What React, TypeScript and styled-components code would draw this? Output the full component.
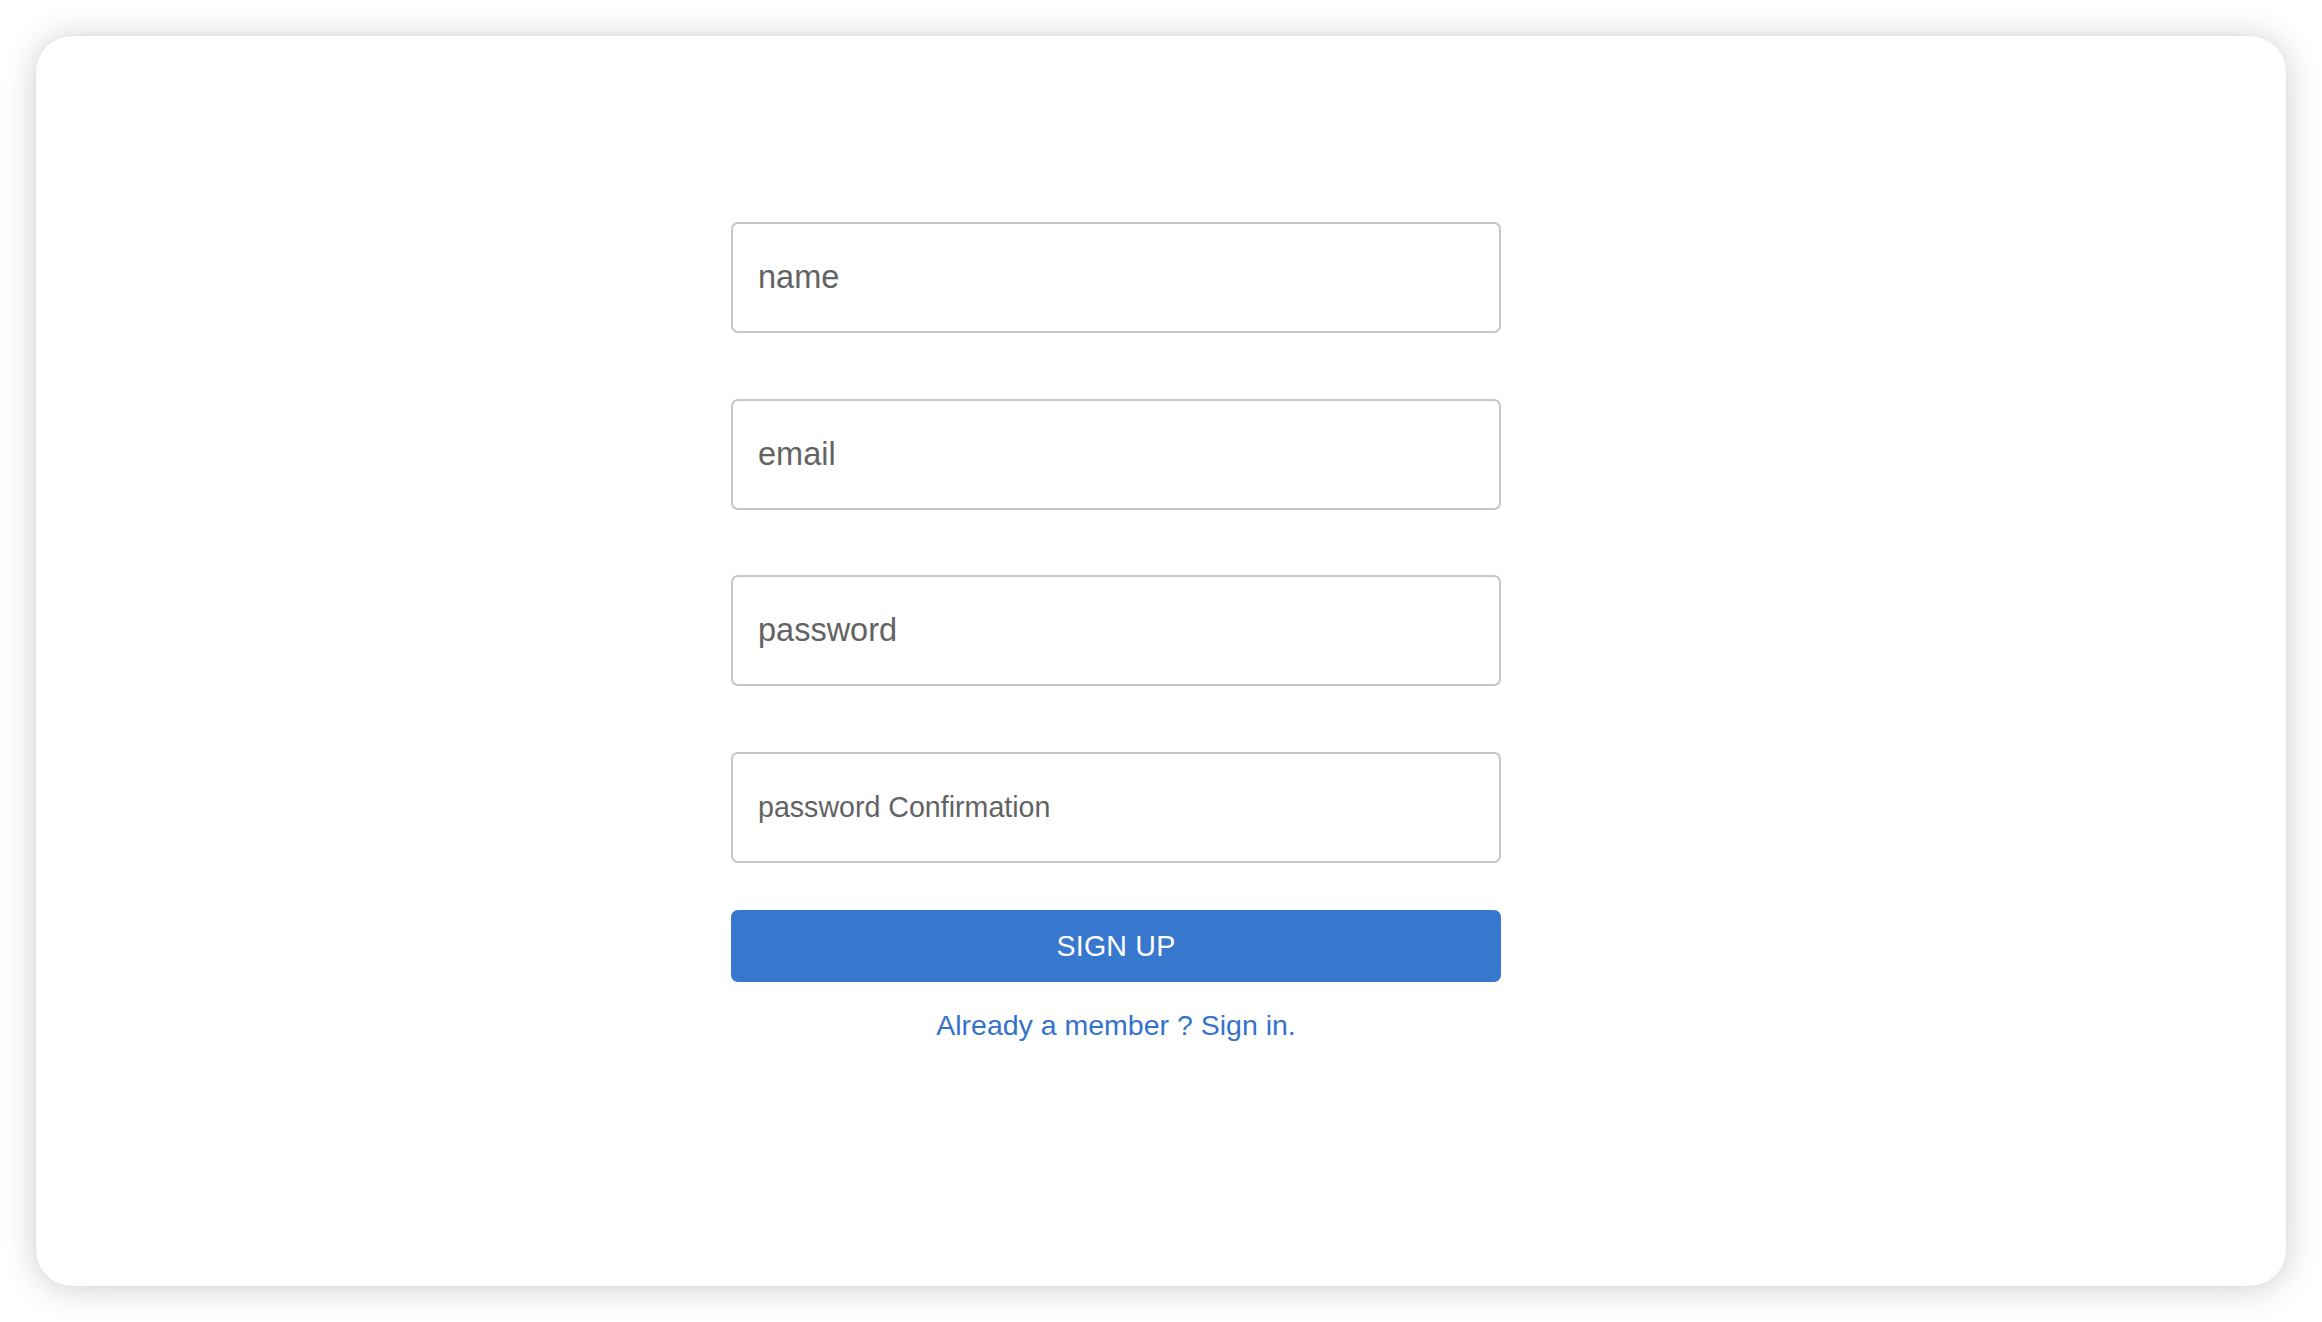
import React from "react";
import styled, { createGlobalStyle } from "styled-components";

const Global = createGlobalStyle`
  html, body {
    margin: 0;
    padding: 0;
    background: #ffffff;
  }
  body {
    font-family: "Liberation Sans", Arial, Helvetica, sans-serif;
  }
  * { box-sizing: border-box; }
`;

const Page = styled.div`
  padding: 36px;
  width: 2322px;
  height: 1322px;
`;

const Window = styled.div`
  width: 2250px;
  height: 1250px;
  border-radius: 36px;
  background: #ffffff;
  box-shadow: 0 2px 34px rgba(0, 0, 0, 0.2), 0 0 2px rgba(0, 0, 0, 0.06);
  padding: 186px 0 0 695px;
`;

const Form = styled.form`
  width: 770px;
  display: flex;
  flex-direction: column;
`;

const Field = styled.input<{ $size?: number }>`
  display: block;
  width: 100%;
  height: 111px;
  margin-bottom: 65.7px;
  padding: 0 25px;
  border: 2px solid #c6c6c6;
  border-radius: 7px;
  background: #ffffff;
  font-family: "Liberation Sans", Arial, sans-serif;
  font-size: ${(p) => p.$size ?? 32.5}px;
  color: #555;
  outline: none;
  &::placeholder {
    color: #636363;
    opacity: 1;
  }
  &:last-of-type {
    margin-bottom: 47px;
  }
`;

const Submit = styled.button`
  width: 100%;
  height: 72px;
  border: none;
  border-radius: 7px;
  background: #3777ce;
  color: #ffffff;
  font-family: "Liberation Sans", Arial, sans-serif;
  font-size: 28.6px;
  letter-spacing: 0.2px;
  cursor: pointer;
`;

const SignIn = styled.a`
  display: block;
  margin-top: 25px;
  text-align: center;
  font-family: "Liberation Sans", Arial, sans-serif;
  font-size: 28.5px;
  line-height: 36px;
  color: #3472cc;
  text-decoration: none;
`;

export default function App() {
  return (
    <>
      <Global />
      <Page>
        <Window>
          <Form onSubmit={(e) => e.preventDefault()}>
            <Field type="text" placeholder="name" />
            <Field type="email" placeholder="email" />
            <Field type="password" placeholder="password" />
            <Field type="password" placeholder="password Confirmation" $size={28.6} />
            <Submit type="submit">SIGN UP</Submit>
            <SignIn href="#">Already a member ? Sign in.</SignIn>
          </Form>
        </Window>
      </Page>
    </>
  );
}
